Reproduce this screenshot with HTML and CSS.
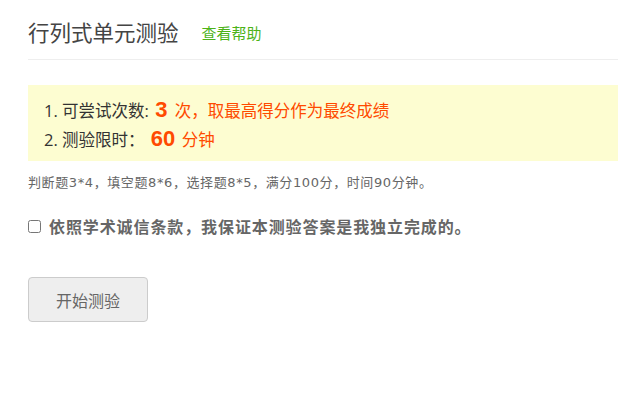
FILE: index.html
```html
<!DOCTYPE html>
<html lang="zh-CN">
<head>
<meta charset="utf-8">
<title>行列式单元测验</title>
<link rel="stylesheet" href="styles.css">
</head>
<body>
<div class="page">
  <div class="header">
    <h1 class="title">行列式单元测验</h1>
    <a class="help" href="#">查看帮助</a>
  </div>
  <div class="notice">
    <div class="line">1. 可尝试次数: <span class="num">3</span> <span class="red">次，取最高得分作为最终成绩</span></div>
    <div class="line">2. 测验限时： <span class="num num2">60</span> <span class="red">分钟</span></div>
  </div>
  <p class="summary">判断题3*4，填空题8*6，选择题8*5，满分100分，时间90分钟。</p>
  <label class="agree"><input type="checkbox" class="check"><span>依照学术诚信条款，我保证本测验答案是我独立完成的。</span></label>
  <button class="start" type="button">开始测验</button>
</div>
</body>
</html>
```
FILE: styles.css
```css
html, body {
  margin: 0;
  padding: 0;
  background: #fff;
}
body {
  font-family: "Liberation Sans", "Noto Sans CJK SC", sans-serif;
  color: #333;
}
.page {
  padding: 0 0 0 28px;
}
.header {
  display: flex;
  align-items: center;
  height: 60px;
  border-bottom: 1px solid #eee;
  box-sizing: border-box;
  padding-top: 4px;
}
.title {
  margin: 0;
  font-size: 21.5px;
  font-weight: normal;
  color: #444;
  font-family: "Noto Sans CJK SC", sans-serif;
}
.help {
  margin-left: 23px;
  font-size: 15px;
  color: #4cb318;
  text-decoration: none;
  font-family: "Noto Sans CJK SC", sans-serif;
  padding-top: 2px;
}
.notice {
  margin-top: 25px;
  background: #fdfdd1;
  height: 76px;
  box-sizing: border-box;
  padding: 10px 0 0 16px;
}
.line {
  font-size: 16.5px;
  line-height: 29px;
  height: 29px;
  color: #333;
  font-family: "Open Sans", "Noto Sans CJK SC", sans-serif;
  white-space: nowrap;
}
.num {
  color: #ff4a00;
  font-weight: bold;
  font-size: 22px;
  font-family: "Liberation Sans", sans-serif;
  margin-left: 2px;
  margin-right: 3px;
}
.num2 {
  margin-left: 2px;
  margin-right: 2px;
}
.red {
  color: #ff4a00;
  font-size: 16.5px;
}
.summary {
  margin: 13px 0 0;
  font-size: 13px;
  line-height: 18px;
  color: #666;
  font-family: "DejaVu Sans", "Noto Sans CJK SC", sans-serif;
  letter-spacing: 0.6px;
}
.agree {
  display: flex;
  align-items: center;
  margin-top: 22px;
  font-size: 16px;
  font-weight: bold;
  color: #666;
  font-family: "Noto Sans CJK SC", sans-serif;
  letter-spacing: 0.9px;
}
.check {
  margin: 0 8px 0 0;
  width: 13px;
  height: 13px;
}
.start {
  display: block;
  margin-top: 39px;
  width: 120px;
  height: 45px;
  background: #eee;
  border: 1px solid #ccc;
  border-radius: 4px;
  font-size: 16px;
  color: #666;
  font-family: "Noto Sans CJK SC", sans-serif;
}
```
